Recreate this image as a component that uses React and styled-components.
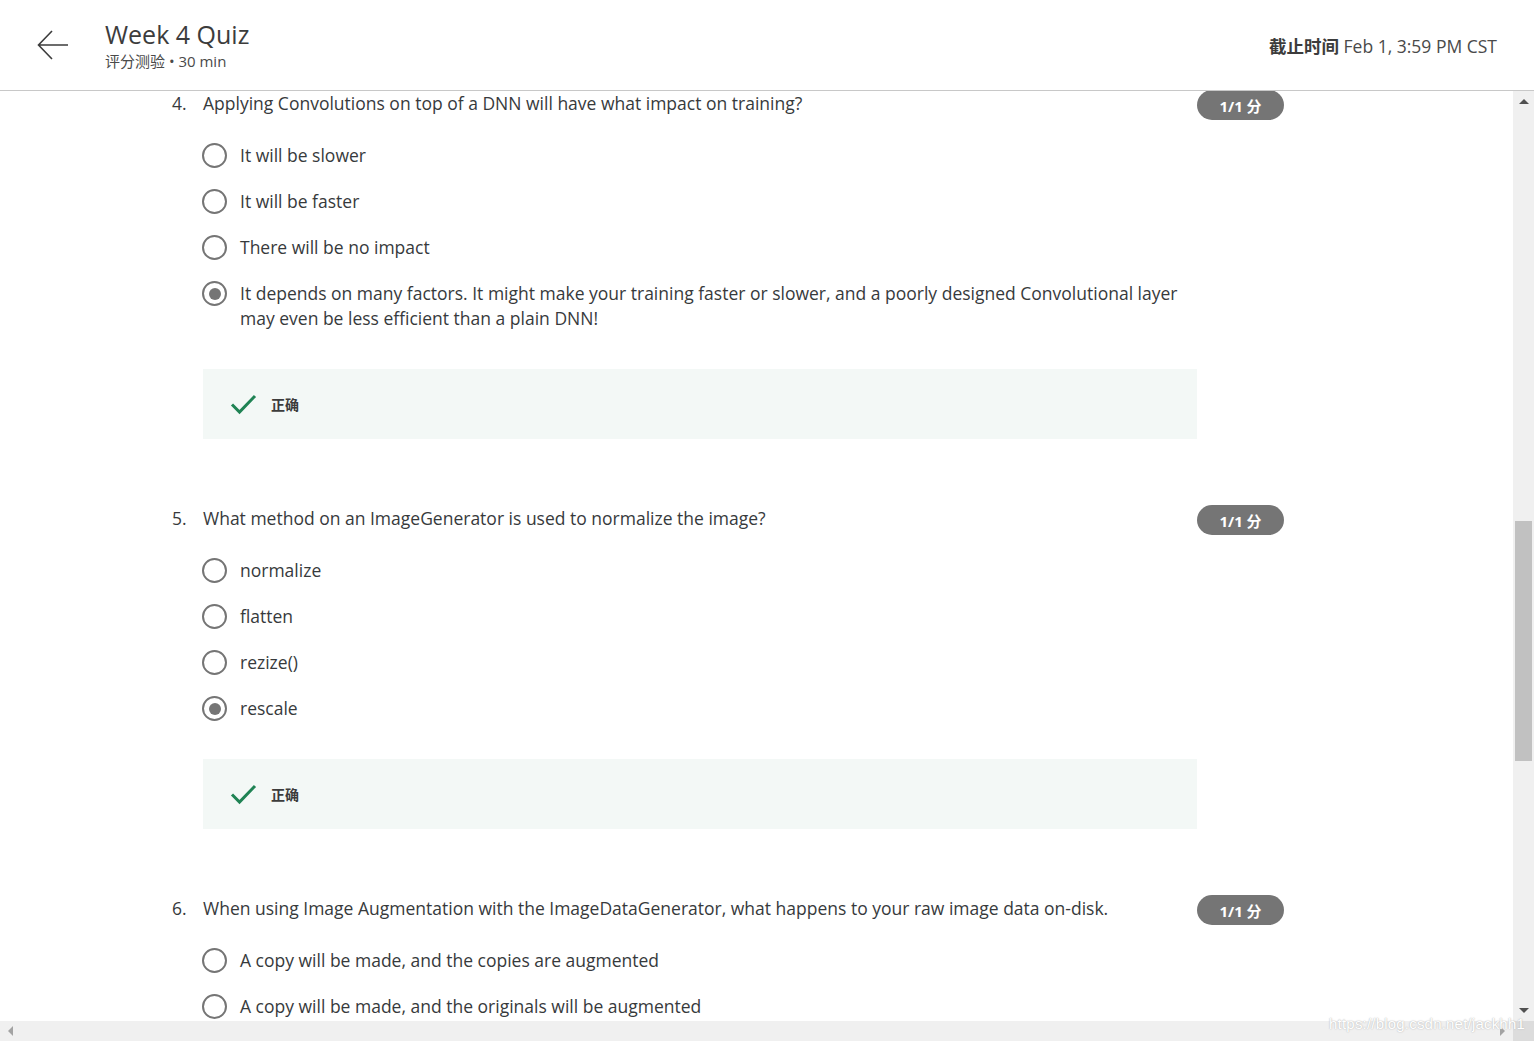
import React from "react";
import styled, { createGlobalStyle } from "styled-components";

const Global = createGlobalStyle`
  html, body { margin: 0; padding: 0; overflow: hidden; background: #fff; }
  body { font-family: "Open Sans", "Noto Sans CJK SC", sans-serif; color: #373a3c; }
  * { box-sizing: border-box; }
`;

const Frame = styled.div`
  position: relative;
  width: 1534px;
  height: 1041px;
  display: flex;
  flex-direction: column;
  overflow: hidden;
`;

const Header = styled.header`
  height: 91px;
  flex: none;
  display: flex;
  align-items: center;
  border-bottom: 1px solid #c8c8c8;
  padding: 0 37px 0 36px;
`;

const BackButton = styled.div`
  width: 34px;
  height: 34px;
  display: flex;
  align-items: center;
  justify-content: center;
  margin-right: 35px;
`;

const TitleBlock = styled.div`
  display: flex;
  flex-direction: column;
  flex: 1;
  margin-top: -1px;
`;

const Title = styled.h1`
  margin: 0;
  font-family: "Open Sans", sans-serif;
  font-weight: 400;
  font-size: 25px;
  line-height: 30px;
  color: #3c3c3c;
`;

const Subtitle = styled.div`
  font-size: 15px;
  line-height: 20px;
  color: #4a4a4a;
  margin-top: 2px;
`;

const Due = styled.div`
  font-size: 17.5px;
  color: #4a4a4a;
  b { font-weight: 700; color: #3c3c3c; }
`;

const Body = styled.div`
  flex: 1;
  display: flex;
  min-height: 0;
`;

const Main = styled.main`
  flex: 1;
  overflow: hidden;
  padding-left: 172px;
`;

const Content = styled.div`
  width: 1112px;
`;

const Question = styled.section`
  margin-top: ${(p) => (p.$first ? "0" : "67px")};
`;

const QRow = styled.div`
  display: flex;
  align-items: flex-start;
`;

const QNum = styled.span`
  width: 31px;
  flex: none;
  font-size: 17.5px;
  line-height: 25px;
  color: #373a3c;
`;

const QText = styled.div`
  flex: 1;
  font-size: 17.5px;
  line-height: 25px;
  color: #373a3c;
`;

const Badge = styled.div`
  flex: none;
  width: 87px;
  height: 30px;
  margin: -1px 0 0 16px;
  border-radius: 15px;
  background: #757575;
  color: #fff;
  font-weight: 700;
  font-size: 15px;
  display: flex;
  align-items: center;
  justify-content: center;
`;

const Options = styled.div`
  display: flex;
  flex-direction: column;
  gap: 21px;
  margin-top: 23px;
  padding-left: 30px;
  width: 1025px;
`;

const Option = styled.label`
  display: flex;
  align-items: flex-start;
  font-size: 17.5px;
  line-height: 25px;
  color: #373a3c;
`;

const Radio = styled.span`
  flex: none;
  width: 25px;
  height: 25px;
  border-radius: 50%;
  border: 2.5px solid #757575;
  margin-right: 13px;
  display: flex;
  align-items: center;
  justify-content: center;
  &::after {
    content: "";
    display: ${(p) => (p.$checked ? "block" : "none")};
    width: 12px;
    height: 12px;
    border-radius: 50%;
    background: #757575;
  }
`;

const Feedback = styled.div`
  margin: 38px 0 0 31px;
  width: 994px;
  height: 70px;
  background: #f3f8f6;
  display: flex;
  align-items: center;
  padding-left: 27px;
  gap: 14px;
  font-size: 14px;
  font-weight: 700;
  color: #3c3c3c;
`;

const VScroll = styled.div`
  width: 21px;
  flex: none;
  background: #f0f0f0;
  display: flex;
  flex-direction: column;
  align-items: center;
  justify-content: space-between;
  padding: 7px 0 7px;
`;

const VThumbArea = styled.div`
  flex: 1;
  width: 100%;
  display: flex;
  flex-direction: column;
  padding-top: 416px;
  align-items: center;
`;

const VThumb = styled.div`
  width: 17px;
  height: 240px;
  background: #c1c1c1;
`;

const HScroll = styled.div`
  height: 20px;
  flex: none;
  display: flex;
  background: #f0f0f0;
`;

const HTrack = styled.div`
  flex: 1;
  display: flex;
  align-items: center;
  justify-content: space-between;
  padding: 0 7px 0 7px;
`;

const Corner = styled.div`
  width: 21px;
  background: #dcdcdc;
`;

const Watermark = styled.div`
  position: absolute;
  right: 9px;
  bottom: 9px;
  font-family: "Liberation Sans", Arial, sans-serif;
  font-size: 15px;
  color: #ffffff;
  text-shadow: 0 0 1px #b8b8b8, 0 0 2px #c8c8c8;
  letter-spacing: 0.2px;
`;

const Tri = ({ dir }) => {
  const pts = {
    up: "0,6 5,1 10,6",
    down: "0,1 5,6 10,1",
    left: "6,0 1,5 6,10",
    right: "1,0 6,5 1,10",
  }[dir];
  const vert = dir === "up" || dir === "down";
  return (
    <svg width={vert ? 10 : 7} height={vert ? 7 : 10} viewBox={vert ? "0 0 10 7" : "0 0 7 10"}>
      <polygon points={pts} fill={dir === "right" || dir === "left" ? "#a3a3a3" : "#505050"} />
    </svg>
  );
};

const Check = () => (
  <svg width="27" height="22" viewBox="0 0 27 22">
    <path d="M2 11.5 L9.5 19 L25 3" fill="none" stroke="#1f8354" strokeWidth="3" />
  </svg>
);

const questions = [
  {
    n: "4.",
    q: "Applying Convolutions on top of a DNN will have what impact on training?",
    opts: [
      "It will be slower",
      "It will be faster",
      "There will be no impact",
      "It depends on many factors. It might make your training faster or slower, and a poorly designed Convolutional layer may even be less efficient than a plain DNN!",
    ],
    sel: 3,
    fb: true,
  },
  {
    n: "5.",
    q: "What method on an ImageGenerator is used to normalize the image?",
    opts: ["normalize", "flatten", "rezize()", "rescale"],
    sel: 3,
    fb: true,
  },
  {
    n: "6.",
    q: "When using Image Augmentation with the ImageDataGenerator, what happens to your raw image data on-disk.",
    opts: [
      "A copy will be made, and the copies are augmented",
      "A copy will be made, and the originals will be augmented",
    ],
    sel: -1,
    fb: false,
  },
];

export default function App() {
  return (
    <>
      <Global />
      <Frame>
        <Header>
          <BackButton>
            <svg width="32" height="30" viewBox="0 0 32 30">
              <path d="M31 15 H2 M15 1 L1.5 15 L15 29" fill="none" stroke="#3c3c3c" strokeWidth="1.6" />
            </svg>
          </BackButton>
          <TitleBlock>
            <Title>Week 4 Quiz</Title>
            <Subtitle>评分测验 • 30 min</Subtitle>
          </TitleBlock>
          <Due>
            <b>截止时间</b> Feb 1, 3:59 PM CST
          </Due>
        </Header>
        <Body>
          <Main>
            <Content>
              {questions.map((q, i) => (
                <Question key={q.n} $first={i === 0}>
                  <QRow>
                    <QNum>{q.n}</QNum>
                    <QText>{q.q}</QText>
                    <Badge>1/1 分</Badge>
                  </QRow>
                  <Options>
                    {q.opts.map((o, j) => (
                      <Option key={j}>
                        <Radio $checked={j === q.sel} />
                        <span>{o}</span>
                      </Option>
                    ))}
                  </Options>
                  {q.fb && (
                    <Feedback>
                      <Check />
                      <span>正确</span>
                    </Feedback>
                  )}
                </Question>
              ))}
            </Content>
          </Main>
          <VScroll>
            <Tri dir="up" />
            <VThumbArea>
              <VThumb />
            </VThumbArea>
            <Tri dir="down" />
          </VScroll>
        </Body>
        <HScroll>
          <HTrack>
            <Tri dir="left" />
            <Tri dir="right" />
          </HTrack>
          <Corner />
        </HScroll>
        <Watermark>https://blog.csdn.net/jackhh1</Watermark>
      </Frame>
    </>
  );
}
